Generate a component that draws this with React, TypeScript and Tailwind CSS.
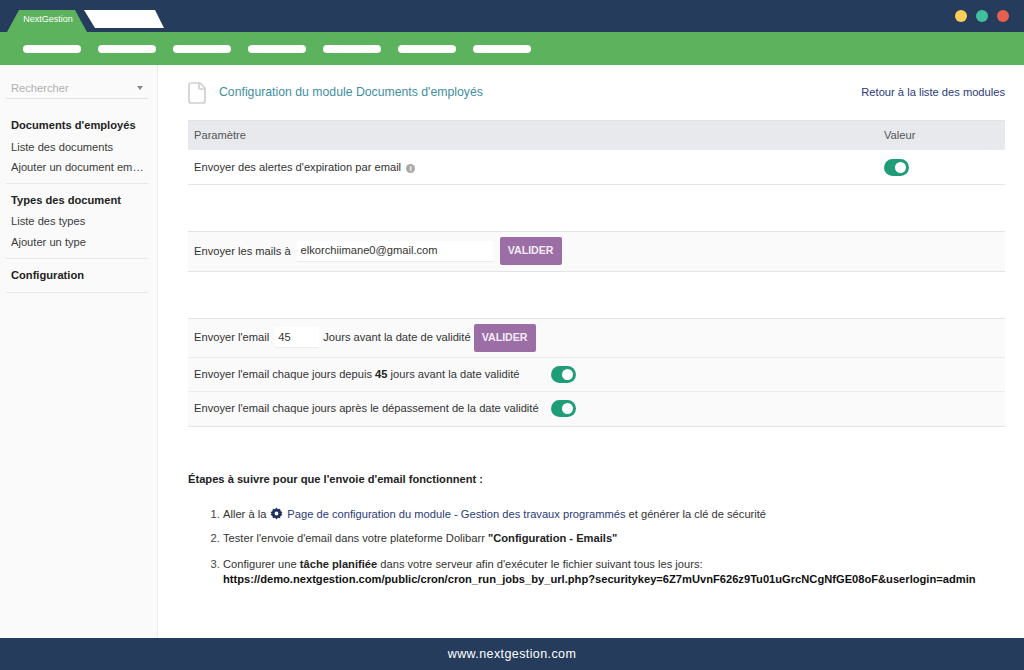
import { File } from 'lucide-react';

const font = "font-['Liberation_Sans',Arial,sans-serif]";

function Toggle() {
  return (
    <span className="flex h-[17px] w-[25px] items-center justify-end rounded-full bg-[#1f9d78] pr-[3px]">
      <span className="h-[11px] w-[11px] rounded-full bg-white" />
    </span>
  );
}

function ValidateButton() {
  return (
    <button className="flex h-[28px] w-[62px] items-center justify-center rounded-[2px] bg-[#9b6fa6] text-[10.6px] font-bold text-[#f3ecf5]">
      VALIDER
    </button>
  );
}

function GearIcon() {
  return (
    <svg viewBox="0 0 24 24" className="mx-[4px] inline-block h-[13px] w-[13px] align-[-2px] fill-[#22305f]">
      <path fillRule="evenodd" d="M12 1l2.6 3.2 4-.9.9 4 3.5 2.2L21 12l2 2.5-3.5 2.2-.9 4-4-.9L12 23l-2.6-3.2-4 .9-.9-4L1 14.5 3 12 1 9.5l3.5-2.2.9-4 4 .9L12 1zm0 7.5a3.5 3.5 0 100 7 3.5 3.5 0 000-7z" />
    </svg>
  );
}

const menuBars = [0, 1, 2, 3, 4, 5, 6];

export default function App() {
  return (
    <div className={`${font} flex h-[670px] w-[1024px] flex-col overflow-hidden bg-white text-[11.15px] text-[#333]`}>
      {/* top bar */}
      <header className="relative h-[32px] shrink-0 bg-[#263c5c]">
        <div className="absolute left-[7px] top-[10px] flex h-[22px] w-[80px] items-center justify-center bg-[#5cb25d] pb-[2px] pl-[2px] text-[9px] text-white [clip-path:polygon(12px_0,68px_0,100%_100%,0_100%)]">
          NextGestion
        </div>
        <div className="absolute left-[84px] top-[10px] h-[18px] w-[80px] bg-white [clip-path:polygon(0_0,71px_0,100%_100%,11px_100%)]" />
        <div className="absolute right-[15px] top-[10px] flex gap-[9px]">
          <span className="h-[12px] w-[12px] rounded-full bg-[#fbcf55]" />
          <span className="h-[12px] w-[12px] rounded-full bg-[#41c0a0]" />
          <span className="h-[12px] w-[12px] rounded-full bg-[#e8604c]" />
        </div>
      </header>

      <nav className="flex h-[33px] shrink-0 items-center gap-[17px] bg-[#5cb25d] pl-[23px]">
        {menuBars.map((i) => (
          <span key={i} className="h-[8px] w-[58px] rounded-full bg-white" />
        ))}
      </nav>

      <div className="flex min-h-0 flex-1">
        {/* left menu */}
        <aside className="w-[158px] shrink-0 border-r border-[#ececec] bg-[#fafafa] pl-[6px] pr-[9px] pt-[16px] text-[#3a3a3a]">
          <div className="flex h-[18px] items-center justify-between border-b border-[#e0e0e0] pb-[3px] pl-[5px] pr-[5px] text-[#b0b0b0]">
            <span>Rechercher</span>
            <span className="h-0 w-0 border-x-[3px] border-t-[4px] border-x-transparent border-t-[#888]" />
          </div>
          <div className="border-b border-[#e8e8e8] pb-[9px] pl-[5px] pt-[18px]">
            <div className="mb-[6px] font-bold text-[#222]">Documents d'employés</div>
            <div className="mb-[6px] leading-[14px]">Liste des documents</div>
            <div className="truncate pr-[1px] leading-[14px]" title="Ajouter un document employé">Ajouter un document employé</div>
          </div>
          <div className="border-b border-[#e8e8e8] pb-[9px] pl-[5px] pt-[8px]">
            <div className="mb-[6px] font-bold text-[#222]">Types des document</div>
            <div className="mb-[7px] leading-[14px]">Liste des types</div>
            <div className="leading-[14px]">Ajouter un type</div>
          </div>
          <div className="h-[34px] border-b border-[#e8e8e8] pl-[5px] pt-[8px] font-bold text-[#222]">Configuration</div>
        </aside>

        {/* main */}
        <main className="min-w-0 flex-1 pl-[30px] pr-[19px]">
          <div className="flex h-[55px] items-center justify-between">
            <div className="flex items-center">
              <File className="ml-[-3px] h-[24px] w-[24px] text-[#d0d0d0]" strokeWidth={1.7} />
              <span className="ml-[10px] text-[12.25px] text-[#3f8f9f]">Configuration du module Documents d'employés</span>
            </div>
            <a className="text-[#2b3a78]">Retour à la liste des modules</a>
          </div>

          <div className="flex h-[30px] items-center border-t border-[#e2e2e2] bg-[#e8e9ed] pl-[6px] text-[#555]">
            <span className="w-[690px]">Paramètre</span>
            <span>Valeur</span>
          </div>
          <div className="flex h-[35px] items-center border-b border-[#e6e6e6] pl-[6px]">
            <span className="w-[690px]">
              Envoyer des alertes d'expiration par email
              <span className="ml-[5px] inline-flex h-[9px] w-[9px] items-center justify-center rounded-full bg-[#aaa] align-[0px] text-[7px] font-bold leading-none text-white">i</span>
            </span>
            <Toggle />
          </div>

          <div className="mt-[46px] flex h-[41px] items-center border-y border-[#e4e4e4] bg-[#fafafa] pb-[1px] pl-[6px]">
            <span>Envoyer les mails à</span>
            <span className="ml-[6px] flex h-[21px] w-[196px] items-center border-b border-[#ececec] bg-white pl-[4px]">elkorchiimane0@gmail.com</span>
            <span className="ml-[7px]"><ValidateButton /></span>
          </div>

          <div className="mt-[46px] border-y border-[#e4e4e4] bg-[#fafafa]">
            <div className="flex h-[39px] items-center border-b border-[#ececec] pb-[1px] pl-[6px]">
              <span>Envoyer l'email</span>
              <span className="ml-[6px] flex h-[21px] w-[44px] items-center border-b border-[#ececec] bg-white pl-[3px]">45</span>
              <span className="ml-[4px]">Jours avant la date de validité</span>
              <span className="ml-[3px]"><ValidateButton /></span>
            </div>
            <div className="flex h-[34px] items-center border-b border-[#ececec] pb-[1px] pl-[6px]">
              <span className="w-[357px]">Envoyer l'email chaque jours depuis <b className="text-[#222]">45</b> jours avant la date validité</span>
              <Toggle />
            </div>
            <div className="flex h-[34px] items-center pb-[1px] pl-[6px]">
              <span className="w-[357px]">Envoyer l'email chaque jours après le dépassement de la date validité</span>
              <Toggle />
            </div>
          </div>

          <h3 className="mt-[45px] text-[11.15px] font-bold leading-[14px] text-[#222]">Étapes à suivre pour que l'envoie d'email fonctionnent :</h3>
          <ol className="mt-[21px] list-decimal pl-[35px] leading-[15px] marker:text-[#444]">
            <li className="mb-[9px]">
              Aller à la<GearIcon /><span className="text-[#2b3a78]">Page de configuration du module - Gestion des travaux programmés</span> et générer la clé de sécurité
            </li>
            <li className="mb-[11px]">
              Tester l'envoie d'email dans votre plateforme Dolibarr <b className="text-[#222]">"Configuration - Emails"</b>
            </li>
            <li>
              Configurer une <b className="text-[#222]">tâche planifiée</b> dans votre serveur afin d'exécuter le fichier suivant tous les jours:
              <br />
              <b className="whitespace-nowrap text-[#111]">https://demo.nextgestion.com/public/cron/cron_run_jobs_by_url.php?securitykey=6Z7mUvnF626z9Tu01uGrcNCgNfGE08oF&amp;userlogin=admin</b>
            </li>
          </ol>
        </main>
      </div>

      <footer className="flex h-[32px] shrink-0 items-center justify-center bg-[#263c5c] text-[12.5px] tracking-[0.4px] text-white">
        www.nextgestion.com
      </footer>
    </div>
  );
}
